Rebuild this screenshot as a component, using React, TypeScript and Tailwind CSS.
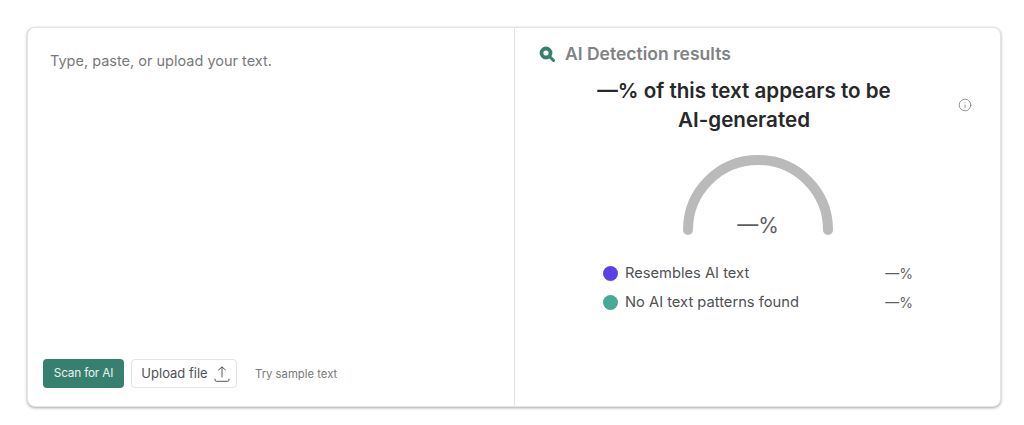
import React from 'react';
import { Info } from 'lucide-react';

const UploadIcon = () => (
    <svg width="16" height="18" viewBox="0 0 16 18" fill="none" stroke="#55595c" strokeWidth="1" strokeLinecap="round">
        <path d="M8 12V2M4.500 5L8 2l3.500 3" />
        <path d="M1 14v1c0 .7.5 1.300 1.200 1.300h11.600c.7 0 1.200-.6 1.200-1.300v-1" />
    </svg>
);

const SearchIcon = () => (
    <svg width="16" height="16" viewBox="0 0 16 16" fill="none" stroke="#37806f">
        <circle cx="7" cy="7" r="4.500" strokeWidth="3.800" />
        <path d="M10.800 10.800L14.500 14.500" strokeWidth="3" strokeLinecap="round" />
    </svg>
);

const Gauge = () => (
    <div className="relative w-[150px] h-[82px]">
        <svg width="150" height="82" viewBox="0 0 150 82" fill="none">
            <path d="M5 76 A70 70 0 0 1 145 76" stroke="#bababa" strokeWidth="10" strokeLinecap="round" />
        </svg>
        <div className="absolute left-0 right-0 top-[57px] text-center text-[21px] leading-[30px] text-[#5f5f5f]">—%</div>
    </div>
);

const LegendRow = ({ color, label }: { color: string; label: string }) => (
    <div className="flex items-center h-[29px]">
        <span className={`w-[15px] h-[15px] rounded-full ${color}`} />
        <span className="ml-[7px] text-[14.700px] text-[#4f5254]">{label}</span>
        <span className="ml-auto text-[14px] text-[#5f5f5f]">—%</span>
    </div>
);

export default function App() {
    return (
        <div className="relative w-[1024px] h-[425px] bg-white pt-[27px] pl-[27px] font-['Inter',sans-serif] overflow-hidden">
            <div className="w-[974px] h-[380px] flex bg-white rounded-lg border border-[#e4e4e4] shadow-[0_1px_3px_rgba(0,0,0,0.35)]">
                <div className="w-[487px] flex flex-col justify-between border-r border-[#e2e2e2] pl-[15px] pb-[18px]">
                    <p className="pl-[7px] pt-[23px] text-[14.500px] leading-[20px] text-[#77797b]">Type, paste, or upload your text.</p>
                    <div className="flex items-center">
                        <button className="w-[81px] h-[29px] pt-px rounded bg-[#37806f] text-[#e8f3f0] text-[11.800px] tracking-[-0.2px]">Scan for AI</button>
                        <button className="ml-[7px] w-[106px] h-[29px] pt-px rounded border border-[#e4e4e4] flex items-center justify-center gap-[6px] pl-[3px] text-[13px] text-[#4f5254]">
                            Upload file <UploadIcon />
                        </button>
                        <span className="ml-[18px] pt-[2px] text-[11.300px] text-[#77797b]">Try sample text</span>
                    </div>
                </div>
                <div className="flex-1 pt-4 relative">
                    <div className="flex items-center pl-[24px] h-5">
                        <SearchIcon />
                        <span className="ml-[10px] text-[17.500px] font-semibold text-[#808284]">AI Detection results</span>
                    </div>
                    <Info size={14} strokeWidth={1.25} className="absolute right-[28px] top-[70px] text-[#6f7173]" />
                    <h2 className="mt-[12px] w-[458px] text-center text-[20.600px] leading-[29px] font-semibold text-[#26282a]">
                        —% of this text appears to be<br />AI-generated
                    </h2>
                    <div className="ml-[168px] mt-[20px]">
                        <Gauge />
                    </div>
                    <div className="ml-[88px] mt-[23px] w-[310px]">
                        <LegendRow color="bg-[#5c40e6]" label="Resembles AI text" />
                        <LegendRow color="bg-[#4aa996]" label="No AI text patterns found" />
                    </div>
                </div>
            </div>
        </div>
    );
}
